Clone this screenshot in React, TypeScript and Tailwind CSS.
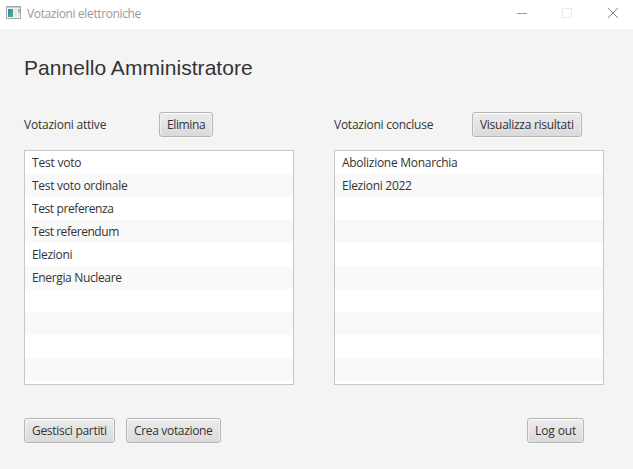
import React from 'react';

type ButtonProps = { children: React.ReactNode; className: string };

function PanelButton({ children, className }: ButtonProps) {
  return (
    <button
      type="button"
      className={`flex h-[25px] shrink-0 items-center whitespace-nowrap rounded-[3px] border border-[#b5b5b5] bg-linear-to-b from-[#ececec] to-[#dadada] pl-[7px] shadow-[inset_0_1px_0_#fcfcfc,inset_1px_0_0_#f0f0f0,inset_-1px_0_0_#f0f0f0,0_1px_0_#fafafa] ${className}`}
    >
      {children}
    </button>
  );
}

type Item = { name: string; spacing: string };

const active: Item[] = [
  { name: 'Test voto', spacing: 'tracking-[-0.2px]' },
  { name: 'Test voto ordinale', spacing: 'tracking-[-0.29px]' },
  { name: 'Test preferenza', spacing: 'tracking-[-0.4px]' },
  { name: 'Test referendum', spacing: 'tracking-[-0.46px]' },
  { name: 'Elezioni', spacing: 'tracking-[-0.3px]' },
  { name: 'Energia Nucleare', spacing: 'tracking-[-0.35px]' },
];

const closed: Item[] = [
  { name: 'Abolizione Monarchia', spacing: 'tracking-[-0.28px]' },
  { name: 'Elezioni 2022', spacing: 'tracking-[-0.28px]' },
];

function ListView({ items }: { items: Item[] }) {
  return (
    <ul className="mt-[13px] h-[235px] w-[270px] border border-[#c8c8c8] bg-white">
      {Array.from({ length: 10 }, (_, i) => (
        <li key={i} className="flex h-[23px] items-center pl-[7px] even:bg-[#f9f9f9]">
          {items[i] && <span className={items[i].spacing}>{items[i].name}</span>}
        </li>
      ))}
    </ul>
  );
}

export default function App() {
  return (
    <div className="flex h-[469px] w-[633px] flex-col overflow-hidden bg-[#f4f4f4] font-['Open_Sans','Noto_Sans',sans-serif] text-[12px] leading-[17px] text-[#333333]">
      <header className="flex h-[29px] shrink-0 items-center bg-white pl-[6px] text-[#999999]">
        <svg width="16" height="14" viewBox="0 0 16 14" shapeRendering="crispEdges" className="mt-[-3px]">
          <defs>
            <linearGradient id="pane" x1="0" y1="0" x2="1" y2="1">
              <stop offset="0" stopColor="#427fa6" />
              <stop offset="1" stopColor="#55b086" />
            </linearGradient>
            <linearGradient id="strip" x1="0" y1="0" x2="0" y2="1">
              <stop offset="0" stopColor="#86acc8" />
              <stop offset="1" stopColor="#a5d3b4" />
            </linearGradient>
          </defs>
          <rect x="0.5" y="0.5" width="14" height="12" fill="#f4f5f6" stroke="#a5abb0" />
          <rect x="1" y="1" width="13" height="1" fill="#c5cacd" />
          <rect x="2" y="3" width="5" height="8" fill="url(#pane)" />
          <rect x="8" y="3" width="3" height="8" fill="#e6e7e8" />
          <rect x="12" y="3" width="2" height="4" fill="url(#strip)" />
          <rect x="12" y="7" width="2" height="4" fill="#e6e7e8" />
        </svg>
        <span className="ml-[5px] mt-[-2px] tracking-[-0.37px]">Votazioni elettroniche</span>
        <svg width="103" height="12" viewBox="0 0 103 12" className="ml-auto mr-[13px] mt-[-3px]" fill="none" shapeRendering="crispEdges">
          <path d="M0 6.5h10" stroke="#999999" />
          <rect x="45.5" y="1.5" width="9" height="9" stroke="#ebebeb" />
          <path d="M91 1l10 10M101 1l-10 10" stroke="#888888" shapeRendering="auto" />
        </svg>
      </header>
      <main className="flex flex-col px-6">
        <h1 className="mt-[27px] h-6 whitespace-nowrap font-['Liberation_Sans',Arial,sans-serif] text-[21px] leading-6 tracking-[0.05px]">Pannello Amministratore</h1>
        <div className="mt-8 flex gap-10">
          <section>
            <div className="flex h-[25px] items-center">
              <h2 className="w-[135px] tracking-[-0.22px]">Votazioni attive</h2>
              <PanelButton className="w-[54px] tracking-[-0.38px]">Elimina</PanelButton>
            </div>
            <ListView items={active} />
          </section>
          <section>
            <div className="flex h-[25px] items-center">
              <h2 className="w-[138px] tracking-[-0.25px]">Votazioni concluse</h2>
              <PanelButton className="w-[110px] tracking-[-0.28px]">Visualizza risultati</PanelButton>
            </div>
            <ListView items={closed} />
          </section>
        </div>
        <footer className="mt-[33px] flex">
          <PanelButton className="w-[91px] tracking-[-0.3px]">Gestisci partiti</PanelButton>
          <PanelButton className="ml-[11px] w-[95px] tracking-[-0.33px]">Crea votazione</PanelButton>
          <PanelButton className="ml-auto mr-[25px] w-[57px] tracking-[-0.1px]">Log out</PanelButton>
        </footer>
      </main>
    </div>
  );
}
